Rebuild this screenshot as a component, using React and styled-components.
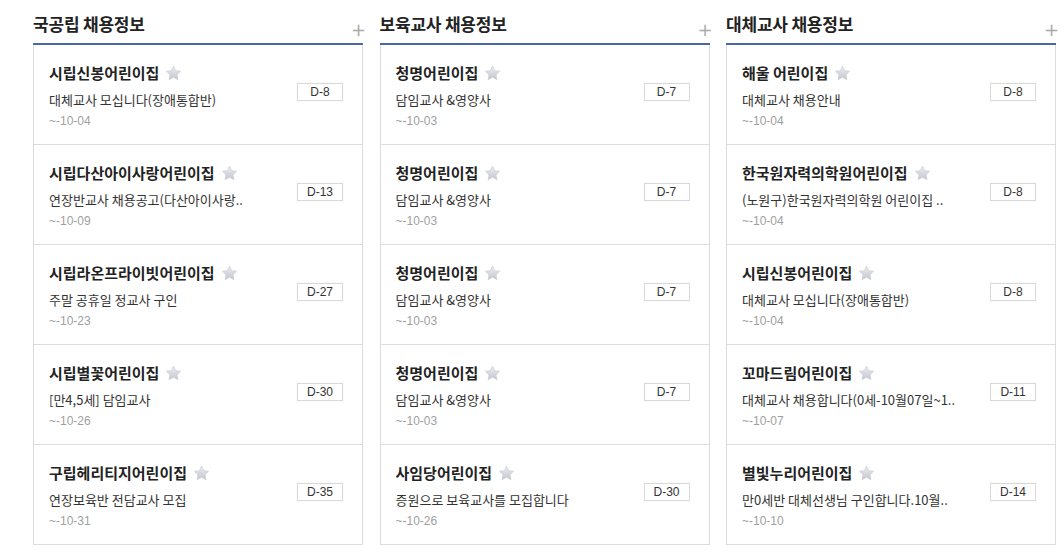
import styled, { createGlobalStyle } from 'styled-components';

const GlobalStyle = createGlobalStyle`
 body {
  margin: 0;
  background: #fff;
  font-family: 'Noto Sans CJK KR', 'Noto Sans', sans-serif;
 }
`;

const Page = styled.div`
 display: grid;
 grid-template-columns: repeat(3, 330px);
 column-gap: 16.5px;
 padding: 0 0 0 33px;
`;

const Column = styled.section`
 display: flex;
 flex-direction: column;
`;

const Header = styled.div`
 height: 45px;
 box-sizing: border-box;
 display: flex;
 align-items: flex-end;
 justify-content: space-between;
 border-bottom: 2px solid #4a67a6;
`;

const Title = styled.h2`
 margin: 0 0 9px;
 font-size: 17px;
 line-height: 20px;
 font-weight: 700;
 color: #222;
 letter-spacing: -0.2px;
`;

const More = styled.span`
 margin: 0 0 4px;
 font-size: 18px;
 line-height: 18px;
 color: #aaa;
 font-family: 'DejaVu Sans', sans-serif;
 width: 12px;
 text-align: center;
`;

const List = styled.ul`
 margin: 0;
 padding: 0;
 list-style: none;
 border: 1px solid #dcdcdc;
 border-top: none;
`;

const Row = styled.li`
 box-sizing: border-box;
 display: flex;
 align-items: center;
 justify-content: space-between;
 padding: 0 19px 0 15px;
 border-top: ${p => (p.$first ? 'none' : '1px solid #dcdcdc')};
 height: ${p => (p.$first ? '99px' : '100px')};
`;

const Info = styled.div`
 align-self: flex-start;
 display: flex;
 flex-direction: column;
 padding-top: 18px;
`;

const Name = styled.div`
 display: flex;
 align-items: center;
 gap: 6px;
 font-size: 15px;
 line-height: 20px;
 font-weight: 700;
 color: #222;
`;

const Desc = styled.div`
 margin-top: 7px;
 font-size: 13px;
 line-height: 20px;
 color: #333;
 white-space: nowrap;
`;

const Date = styled.div`
 margin-top: 1px;
 font-size: 12px;
 line-height: 20px;
 color: #a0a0a0;
 font-family: 'Liberation Sans', sans-serif;
`;

const Badge = styled.span`
 width: 46px;
 height: 18px;
 box-sizing: border-box;
 display: flex;
 align-items: center;
 justify-content: center;
 border: 1px solid #d8d8d8;
 box-shadow: 0 0 1px #eee;
 font-size: 12px;
 color: #333;
 font-family: 'Liberation Sans', sans-serif;
 margin-bottom: 5px;
`;

const Star = () => (
 <svg width="17" height="16" viewBox="0 0 24 23">
  <defs>
   <linearGradient id="sg" x1="0" y1="0" x2="0" y2="1">
    <stop offset="0" stopColor="#eceef3" />
    <stop offset="1" stopColor="#c3c6ce" />
   </linearGradient>
  </defs>
  <path
   d="M12 1.5l3.1 6.6 7.2.9-5.3 5 1.4 7.1L12 17.6l-6.4 3.5 1.4-7.1-5.3-5 7.2-.9z"
   fill="url(#sg)"
   stroke="#c9ccd3"
   strokeWidth="1"
   strokeLinejoin="round"
  />
 </svg>
);

const columns = [
 {
  title: '국공립 채용정보',
  items: [
   ['시립신봉어린이집', '대체교사 모십니다(장애통합반)', '~-10-04', 'D-8'],
   ['시립다산아이사랑어린이집', '연장반교사 채용공고(다산아이사랑..', '~-10-09', 'D-13'],
   ['시립라온프라이빗어린이집', '주말 공휴일 정교사 구인', '~-10-23', 'D-27'],
   ['시립별꽃어린이집', '[만4,5세] 담임교사', '~-10-26', 'D-30'],
   ['구립헤리티지어린이집', '연장보육반 전담교사 모집', '~-10-31', 'D-35'],
  ],
 },
 {
  title: '보육교사 채용정보',
  items: [
   ['청명어린이집', '담임교사 &영양사', '~-10-03', 'D-7'],
   ['청명어린이집', '담임교사 &영양사', '~-10-03', 'D-7'],
   ['청명어린이집', '담임교사 &영양사', '~-10-03', 'D-7'],
   ['청명어린이집', '담임교사 &영양사', '~-10-03', 'D-7'],
   ['사임당어린이집', '증원으로 보육교사를 모집합니다', '~-10-26', 'D-30'],
  ],
 },
 {
  title: '대체교사 채용정보',
  items: [
   ['해울 어린이집', '대체교사 채용안내', '~-10-04', 'D-8'],
   ['한국원자력의학원어린이집', '(노원구)한국원자력의학원 어린이집 ..', '~-10-04', 'D-8'],
   ['시립신봉어린이집', '대체교사 모십니다(장애통합반)', '~-10-04', 'D-8'],
   ['꼬마드림어린이집', '대체교사 채용합니다(0세-10월07일~1..', '~-10-07', 'D-11'],
   ['별빛누리어린이집', '만0세반 대체선생님 구인합니다.10월..', '~-10-10', 'D-14'],
  ],
 },
];

const App = () => {
 return (
  <>
   <GlobalStyle />
   <Page>
    {columns.map(col => (
     <Column key={col.title}>
      <Header>
       <Title>{col.title}</Title>
       <More>+</More>
      </Header>
      <List>
       {col.items.map(([name, desc, date, dday], i) => (
        <Row key={i} $first={i === 0}>
         <Info>
          <Name>
           {name}
           <Star />
          </Name>
          <Desc>{desc}</Desc>
          <Date>{date}</Date>
         </Info>
         <Badge>{dday}</Badge>
        </Row>
       ))}
      </List>
     </Column>
    ))}
   </Page>
  </>
 );
};

export default App;
